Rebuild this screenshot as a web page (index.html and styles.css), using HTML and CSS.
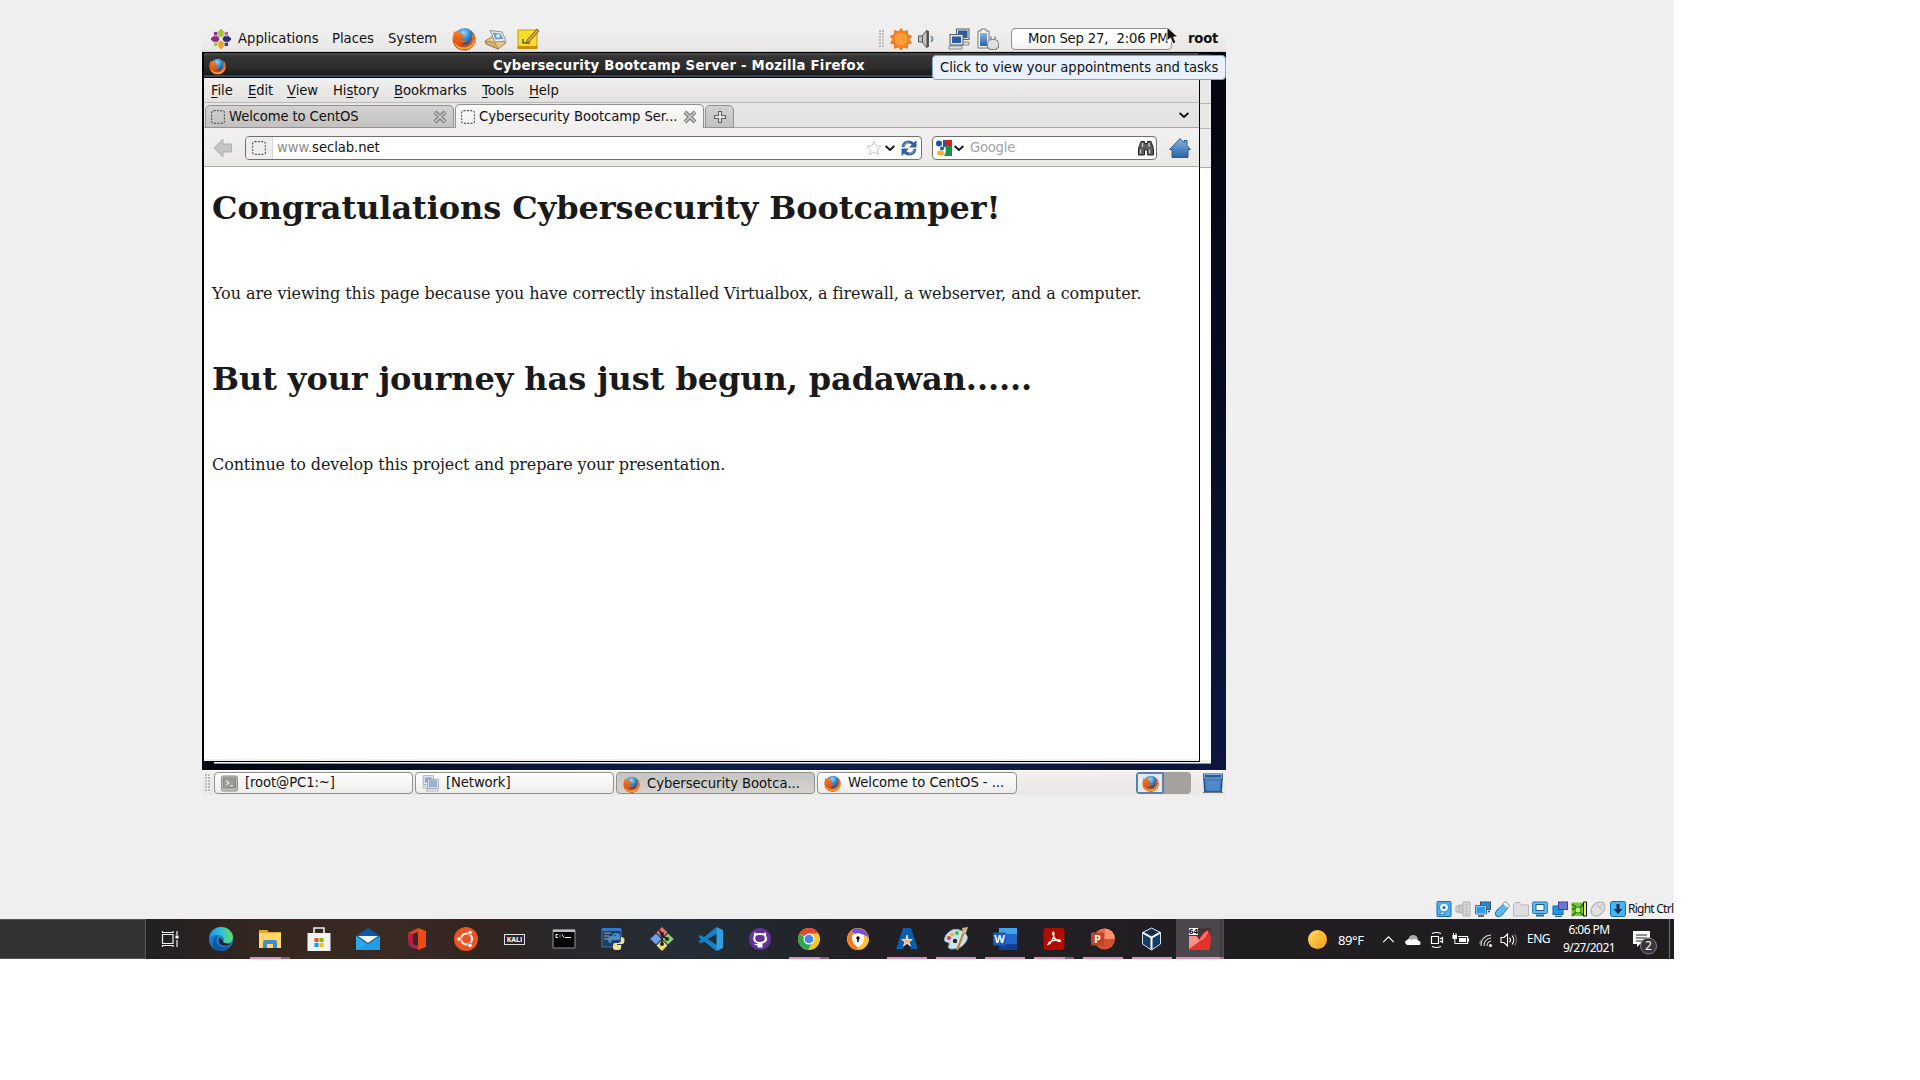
FILE: index.html
```html
<!DOCTYPE html>
<html lang="en">
<head>
<meta charset="utf-8">
<title>Cybersecurity Bootcamp Server</title>
<link rel="stylesheet" href="styles.css">
</head>
<body>
<svg class="defs" aria-hidden="true">
  <defs>
    <radialGradient id="globe" cx=".45" cy=".25" r=".7"><stop offset="0" stop-color="#9bd8f5"/><stop offset=".5" stop-color="#2b7fc4"/><stop offset="1" stop-color="#123a78"/></radialGradient>
    <linearGradient id="fox" x1="0" y1="0" x2="0" y2="1"><stop offset="0" stop-color="#f5852a"/><stop offset=".6" stop-color="#e0591a"/><stop offset="1" stop-color="#b5330d"/></linearGradient>
    <linearGradient id="blue" x1="0" y1="0" x2="0" y2="1"><stop offset="0" stop-color="#86b4e2"/><stop offset="1" stop-color="#2d62a6"/></linearGradient>
    <linearGradient id="edge" x1="0" y1="0" x2="1" y2="0"><stop offset="0" stop-color="#1f8fe0"/><stop offset=".5" stop-color="#2fc3d8"/><stop offset="1" stop-color="#62de62"/></linearGradient>
  </defs>
  <symbol id="firefox" viewBox="0 0 24 24">
    <circle cx="12.500" cy="11" r="10" fill="url(#globe)"/>
    <path d="M2 3l1 2.500 3-2.500 1 3C10 6 12 8 11.500 9.500L9 11c0 2 3 3 6 1.500-1 3-4 4.500-6.500 3.500 2 2.500 7 2.500 9.500-.5 2.500-3 2.500-6 1.500-8.500L21 8.500 20.500 4C24 8 24.800 14 22 18c-3 5-9 7-14.500 4.500C1 20-.8 13 1.500 7z" fill="url(#fox)"/>
    <path d="M2.500 15c3 5 9 6.500 13.500 4.500 3.500-1.500 5.500-4 6-8C24 18 18 23 12 22.500 7 22.500 3 20 2.500 15z" fill="#f9a637"/>
  </symbol>
  <symbol id="blank" viewBox="0 0 14 14"><rect x=".6" y=".6" width="12.800" height="12.800" rx="2" fill="none" stroke="#555" stroke-width="1.100" stroke-dasharray="2 1.300"/></symbol>
  <symbol id="close" viewBox="0 0 14 14"><path d="M2 2l10 10M12 2L2 12" stroke="#7c7e79" stroke-width="4"/><path d="M2.300 2.300l9.400 9.400m0-9.400l-9.400 9.400" stroke="#c4c5c2" stroke-width="1.800"/></symbol>
  <symbol id="chev" viewBox="0 0 10 6"><path d="M.6 1L5 5l4.400-4" fill="none" stroke="#111" stroke-width="1.900"/></symbol>
  <symbol id="monitors" viewBox="0 0 22 22"><path d="M12 14h9v3h-9zM1 18h13v3H1z" fill="#dfe2dd" stroke="#777" stroke-width=".8"/><rect x="8.500" y="1" width="12.500" height="10.500" fill="#e1e4e8" stroke="#59616b"/><rect x="10" y="2.500" width="9.500" height="7.500" fill="#2c5c9b"/><rect x="2" y="6.500" width="13" height="10.500" fill="#e1e4e8" stroke="#59616b"/><rect x="4" y="8.500" width="9" height="6.500" fill="#2c5c9b"/></symbol>
  <symbol id="monitors-dim" viewBox="0 0 22 22"><path d="M1 14h12v3H1zM6 18h15v3H6z" fill="#e0e0de" stroke="#b0b0ae" stroke-width=".8"/><rect x="1.500" y="1" width="13" height="11" fill="#f1f3f5" stroke="#8f9bb0"/><rect x="3.500" y="3" width="9" height="7" fill="#8fa6cc"/><rect x="7.500" y="5.500" width="13.500" height="11.500" fill="#f1f3f5" stroke="#8f959e"/><rect x="9.500" y="7.500" width="9.500" height="7.500" fill="#9db3d6" stroke="#7690bb" stroke-width=".8"/></symbol>
</svg>

<main class="stage">
  <section class="vm">
    <header class="panel panel-top">
      <svg class="i22" viewBox="0 0 22 22"><g stroke="#fff" stroke-width=".7"><path d="M3.500 3.500h6v6h-6z" fill="#8f2f86"/><path d="M12.500 3.500h6v6h-6z" fill="#b06aa6"/><path d="M3.500 12.500h6v6h-6z" fill="#a3bf3a"/><path d="M12.500 12.500h6v6h-6z" fill="#3b3b80"/><path d="M11 0l3.200 3.200v5L11 10 7.800 8.200v-5z" fill="#a4c639"/><path d="M22 11l-3.200 3.200h-5L12 11l1.800-3.200h5z" fill="#2c2d77"/><path d="M11 22l-3.200-3.200v-5L11 12l3.200 1.800v5z" fill="#eda52f"/><path d="M0 11l3.200-3.200h5L10 11l-1.800 3.200h-5z" fill="#8d2a83"/></g></svg>
      <span>Applications</span><span>Places</span><span>System</span>
      <svg class="i24"><use href="#firefox"/></svg>
      <svg class="i24" viewBox="0 0 24 24"><path d="M1 14L9 9l13 7-8 6-12-5z" fill="#e9c48d" stroke="#9b7a4b" stroke-width=".9"/><path d="M6 3.500L18 5l4 9-11 1z" fill="#eef3f1" stroke="#7c8b8c" stroke-width=".9"/><path d="M8.500 5.500l8 1 3 5.500-8 .5z" fill="#6b9fc0"/><circle cx="14" cy="9" r="2" fill="#d8e8ea"/><path d="M1.500 14l9 1.500 4 6.500-12-5z" fill="#dcb072" stroke="#9b7a4b" stroke-width=".7"/></svg>
      <svg class="i24" viewBox="0 0 24 24"><path d="M2 3h19v17H2z" fill="#f7dd28" stroke="#c79d0c"/><path d="M1.500 19h20v3h-20z" fill="#c79000"/><path d="M7 12v4h7" fill="none" stroke="#333" stroke-width="1.200"/><path d="M21 2L11 13l-1 3 3-1L23 4z" fill="#d9a247" stroke="#5f4b23" stroke-width=".8"/></svg>
      <i></i>
      <i class="grip"></i>
      <svg class="i22" viewBox="0 0 22 22"><path d="M11 .5l2.500 3.300L17.500 2.500v4.200l4 1.300-2.300 3.500 2.300 3.500-4 1.200v4.100l-4-1.200L11 22l-2.500-2.900-4 1.200v-4.100l-4-1.200 2.300-3.500L.5 8l4-1.300V2.500l4 1.300z" fill="#f58220" stroke="#dc7012" stroke-width=".8"/><circle cx="11" cy="11" r="6.500" fill="#fc9c38"/></svg>
      <svg class="i22" viewBox="0 0 22 22"><path d="M1.500 8H5l5-6v18l-5-6H1.500z" fill="#c3c6c0" stroke="#555"/><path d="M5.500 7.500v7" stroke="#555"/><path d="M11 3v16" stroke="#444" stroke-width="1.800"/><path d="M14 8q3 3 0 6" fill="none" stroke="#6d87aa" stroke-width="1.700"/></svg>
      <svg class="i22"><use href="#monitors"/></svg>
      <svg class="i22" viewBox="0 0 22 22"><path d="M1 3h3V1h5v2h3v17H1z" fill="#f3f5f3" stroke="#777"/><path d="M3 5h7v13H3z" fill="url(#blue)"/><path d="M14 12V8.500M18 12V8.500" stroke="#82857f" stroke-width="1.500"/><path d="M10.500 20v-4.500q0-4 4-4h3q4 0 4 4V20h-2v1.500h-7V20z" fill="#dfe1dd" stroke="#82857f"/></svg>
      <div class="clock">Mon Sep 27,&nbsp; 2:06 PM</div>
      <b class="user">root</b>
    </header>

    <div class="desktop">
      <div class="back-window"><i class="b-title"></i><i class="b-menu"></i><i class="b-tabs"></i><i class="b-tools"></i><i class="b-page"></i></div>
      <div class="window">
        <div class="title"><svg class="i17"><use href="#firefox"/></svg><b>Cybersecurity Bootcamp Server - Mozilla Firefox</b></div>
        <nav class="menu"><span><u>F</u>ile</span><span><u>E</u>dit</span><span><u>V</u>iew</span><span>Hi<u>s</u>tory</span><span><u>B</u>ookmarks</span><span><u>T</u>ools</span><span><u>H</u>elp</span></nav>
        <div class="tabs">
          <div class="tab"><svg class="i14"><use href="#blank"/></svg><span class="t1">Welcome to CentOS</span><svg class="i14"><use href="#close"/></svg></div>
          <div class="tab active"><svg class="i14"><use href="#blank"/></svg><span class="t2">Cybersecurity Bootcamp Ser...</span><svg class="i14"><use href="#close"/></svg></div>
          <div class="tab plus"><svg class="i14" viewBox="0 0 14 14"><path d="M5.500 1.500h3v4h4v3h-4v4h-3v-4h-4v-3h4z" fill="#e6e6e5" stroke="#62645f" stroke-width="1.100"/></svg></div>
          <svg class="chev all"><use href="#chev"/></svg>
        </div>
        <div class="tools">
          <svg class="back" viewBox="0 0 20 20"><path d="M1 10l9-9v5h8.500v8H10v5z" fill="#c3c5c5" stroke="#b0b2b2"/></svg>
          <div class="field url">
            <div class="site"><svg class="i14"><use href="#blank"/></svg></div>
            <span class="addr"><em>www.</em>seclab.net</span>
            <svg class="star" viewBox="0 0 16 16"><path d="M8 1l2 4.800 5.200.4-4 3.400 1.300 5L8 12l-4.500 2.600 1.300-5-4-3.400L6 5.800z" fill="#fff" stroke="#c5c5c5"/></svg>
            <svg class="chev"><use href="#chev"/></svg>
            <svg class="i16" viewBox="0 0 16 16"><path d="M2 7Q3 2 8 2q2.500 0 4 2M14 9q-1 5-6 5-2.500 0-4-2" fill="none" stroke="#315f9f" stroke-width="3"/><path d="M15.500 0v7.500H8zM.5 16V8.500H8z" fill="#315f9f"/><path d="M2.500 6Q4 2.500 8 2.500M13.500 10Q12 13.500 8 13.500" fill="none" stroke="#a9c6e8" stroke-width=".9"/></svg>
          </div>
          <div class="field search">
            <svg class="i16" viewBox="0 0 16 16"><path d="M0 0h9v16H0z" fill="#fff"/><path d="M9 0h7v6H9z" fill="#db1e1c"/><path d="M9 6h7v10H8q3-4 1-10z" fill="#159340"/><path d="M7 0h2v7H7z" fill="#1f52b0"/><circle cx="3" cy="3.500" r="3" fill="#1f52b0"/><circle cx="6" cy="8.500" r="2" fill="#1f52b0"/><ellipse cx="4.500" cy="13" rx="3.500" ry="2.600" fill="#f2b517"/></svg>
            <svg class="chev"><use href="#chev"/></svg>
            <span class="google">Google</span>
            <svg class="i16" viewBox="0 0 16 16"><path d="M3 1.500h3.500v2h3v-2H13l2.500 7V15H9.500v-5h-3v5h-6V8.500z" fill="#5b5d5a" stroke="#222"/><path d="M2.500 9.500v4M11.500 9.500v4M4.500 3v4M11 3v4" stroke="#c5c8c3" stroke-width="1.400"/></svg>
          </div>
          <svg class="home" viewBox="0 0 22 20"><path d="M11 .5l4 4V2.500h3v5l3.500 4H19V19.500H3v-8H.5z" fill="url(#blue)" stroke="#2d5a94"/></svg>
        </div>
        <article class="page">
          <h1 class="h1">Congratulations Cybersecurity Bootcamper!</h1>
          <p class="p1">You are viewing this page because you have correctly installed Virtualbox, a firewall, a webserver, and a computer.</p>
          <h1 class="h2">But your journey has just begun, padawan......</h1>
          <p class="p2">Continue to develop this project and prepare your presentation.</p>
        </article>
        <div class="status"></div>
      </div>
    </div>

    <footer class="panel panel-bottom">
      <i class="grip"></i>
      <div class="task"><svg class="i17" viewBox="0 0 17 17"><rect x=".5" y="1" width="16" height="15" rx="1.500" fill="#c2c3c0" stroke="#8a8c88"/><rect x="2.500" y="3" width="12" height="10" fill="#9a9c98" stroke="#858783"/><path d="M5 5.500l3 2.300-3 2.300m4 .6h3" fill="none" stroke="#eee" stroke-width="1.100"/></svg><span>[root@PC1:~]</span></div>
      <div class="task"><svg class="i17"><use href="#monitors-dim"/></svg><span>[Network]</span></div>
      <div class="task pressed"><svg class="i17"><use href="#firefox"/></svg><span class="tc">Cybersecurity Bootca...</span></div>
      <div class="task"><svg class="i17"><use href="#firefox"/></svg><span class="tw">Welcome to CentOS - ...</span></div>
      <div class="switcher"><div><svg class="i17"><use href="#firefox"/></svg></div></div>
      <svg class="trash" viewBox="0 0 20 20"><path d="M.8 1h18.400v4l-1 14H1.800l-1-14z" fill="#3e79bd" stroke="#1d4478" stroke-width="1.200"/><path d="M1.500 1.500h17v3.500h-17z" fill="#2b5a98" stroke="#7fabd8"/><path d="M3 7.500h14l-1 10H4z" fill="#5289c8"/><path d="M0 19.500h20" stroke="#777"/></svg>
    </footer>
    <div class="tooltip">Click to view your appointments and tasks</div>
    <svg class="cursor" viewBox="0 0 13 19"><path d="M1 1v14l3.500-3 2.500 6 3-1.500-2.500-5.500H12z" fill="#111" stroke="#fff"/></svg>
  </section>

  <div class="vbox">
    <svg viewBox="0 0 16 16"><rect x="1" y=".5" width="14" height="15" rx="1" fill="#4db2f5" stroke="#126cae"/><circle cx="8" cy="6.500" r="4.500" fill="#e6f5ff" stroke="#1f6fad" stroke-width=".8"/><circle cx="8" cy="6.500" r="1.500" fill="#1e72b8"/><path d="M3 13.500h6l-2-3z" fill="#fff" stroke="#1f6fad" stroke-width=".7"/></svg>
    <svg viewBox="0 0 16 16"><path d="M1 5h3v6H1zM4 4h3v8H4zM8 1h7v14H8z" fill="#d9d9d9" stroke="#b0b0b0"/><path d="M10 4h3M10 7h3M10 10h3M10 13h3" stroke="#aaa"/></svg>
    <svg viewBox="0 0 16 16"><rect x="5.500" y="1" width="10" height="7.500" fill="#1c8de0" stroke="#3a4f61"/><rect x="1" y="5" width="10" height="7.500" fill="#279df1" stroke="#e4f3ff"/><path d="M.5 4.500h11v8.500H.5z" fill="none" stroke="#31495c" stroke-width=".8"/><path d="M3 15h6m4-4.500h2" stroke="#31495c" stroke-width="1.500"/></svg>
    <svg viewBox="0 0 16 16"><path d="M10 3l4 4-6 7q-3 3-6 1-2-3 1-6z" fill="#5cb9f4" stroke="#2371ad"/><path d="M11.500.5l4 4-2.500 3-4.500-4.500z" fill="#eef6fb" stroke="#5d7a8f" stroke-width=".8"/></svg>
    <svg viewBox="0 0 16 16"><path d="M.5 4l2-2.500h4L8 4h7.500v11H.5z" fill="#dedede" stroke="#b7b7b7"/></svg>
    <svg viewBox="0 0 16 16"><rect x=".7" y="1" width="14.600" height="11.500" rx="1" fill="#5fc0fb" stroke="#1470b0"/><rect x="4" y="3.500" width="8" height="6" fill="#fff" stroke="#1c5a8b"/><path d="M4 14.500h8" stroke="#1470b0" stroke-width="2"/></svg>
    <svg viewBox="0 0 16 16"><rect x="1" y="5" width="10" height="8.500" fill="#2196ea" stroke="#1767a5"/><rect x="6.500" y="1" width="9" height="7.500" fill="#6b78cf" stroke="#3b428c"/><path d="M3 15.300h7" stroke="#1767a5" stroke-width="1.300"/></svg>
    <svg viewBox="0 0 16 16"><path d="M.5 1.500h14v13.500H.5z" fill="#70c934"/><path d="M1 3l5 4h3l4-5M1 8h3M1 15l5-5m3 1l4 4" fill="none" stroke="#2b6812" stroke-width="1.500"/><circle cx="7" cy="9" r="3" fill="#bbf179" stroke="#3c8518"/><path d="M12.500 1h3v14h-3z" fill="#d6f17b" stroke="#111"/></svg>
    <svg viewBox="0 0 16 16"><ellipse cx="8" cy="8" rx="8" ry="5.800" transform="rotate(-45 8 8)" fill="#e0e0e0" stroke="#aaa"/><path d="M7 4l5 5M9.500 6.500L13 3" stroke="#aaa" fill="none"/></svg>
    <svg viewBox="0 0 16 16"><rect x=".5" y=".5" width="15" height="15" rx="2" fill="#49b4f5" stroke="#166ca9"/><path d="M6.500 3h3v5h3L8 13 3.500 8h3z" fill="#0c2f50"/></svg>
    <span>Right Ctrl</span>
  </div>

  <footer class="taskbar">
    <div class="searchbox"></div>
    <div class="app view"><svg viewBox="0 0 24 24"><path d="M4.500 7.500h10.500v9H4.500zM4.500 4v1.500h10.500V4M4.500 20v-1.500h10.500V20M19 4v4m0 5v7" fill="none" stroke="#eee" stroke-width="1.200"/><path d="M17.500 8.500h3v3h-3z" fill="#fff"/></svg></div>
    <div class="app"><svg viewBox="0 0 24 24"><circle cx="12" cy="12" r="12" fill="#167fd2"/><path d="M0 11C1 4 6 0 12 0c7 0 12 5 12 10 0 4-3 6.500-6.500 6.500-3 0-4-1-3-2.500 1.500-2.500-1-6-5-6C5 8 1 9 0 11z" fill="url(#edge)"/><path d="M9 9c-4 5 0 11 6 11 4 0 6-1.500 7-2.500C19 22 16 24 12 24 6 24 2 20 4 14c1-3 3-5 5-5z" fill="#1556a0"/><path d="M10.500 11c-2 4 0 7 5 7.500 3 0 5-.5 7-2-4 .5-8 0-9-2.500-.3-1-1-3-3-3z" fill="#2a2020"/></svg></div>
    <div class="app open multi"><svg viewBox="0 0 24 24"><path d="M1 3h8l2 2h12v16H1z" fill="#e2a52b"/><path d="M1 6h22v15H1z" fill="#ffd869"/><path d="M5 21v-6q0-2 2-2h10q2 0 2 2v6h-4v-4H9v4z" fill="#3a8fd0"/></svg></div>
    <div class="app"><svg viewBox="0 0 24 24"><path d="M7 7V1h10v6" fill="none" stroke="#eee" stroke-width="1.600"/><path d="M.5 6h23v18H.5z" fill="#f2f2f2"/><path d="M7.500 11h4v4h-4z" fill="#f25022"/><path d="M12.500 11h4v4h-4z" fill="#7fba00"/><path d="M7.500 16h4v4h-4z" fill="#00a4ef"/><path d="M12.500 16h4v4h-4z" fill="#ffb900"/></svg></div>
    <div class="app"><svg viewBox="0 0 24 24"><path d="M0 9l12-8 12 8v4H0z" fill="#0c59a4"/><path d="M0 9l12 8L24 9v14H0z" fill="#2aa9ee"/><path d="M2 9h20l-10 7z" fill="#f4f9fd"/><path d="M24 9v14H0z" fill="#1789d8" opacity=".4"/></svg></div>
    <div class="app"><svg viewBox="0 0 24 24"><path d="M3 6l10-5v4L8 7v10l-4 2z" fill="#d8452b"/><path d="M4 19l4-2 6 2v4l-6-2z" fill="#a82454"/><path d="M13 1l8 3v16l-8 3z" fill="#ed4b13"/><path d="M3 6l5 1v10l-4 2z" fill="#b91c3d"/></svg></div>
    <div class="app"><svg viewBox="0 0 24 24"><circle cx="12" cy="12" r="12" fill="#e95420"/><circle cx="12.500" cy="12" r="5.500" fill="none" stroke="#fff" stroke-width="2"/><g fill="#fff" stroke="#e95420"><circle cx="5" cy="12" r="2.300"/><circle cx="16" cy="5.500" r="2.300"/><circle cx="16" cy="18.500" r="2.300"/></g></svg></div>
    <div class="app"><b class="kali">KALI</b></div>
    <div class="app"><svg viewBox="0 0 24 24"><path d="M1 3h22v18H1z" fill="#050505" stroke="#8d9296"/><path d="M1 2.500h22v2.500H1z" fill="#b9bec2"/><path d="M6 7.500H4v3h2m2-3v1m0 1v1m2-3l2 3m1 0h6" fill="none" stroke="#fff"/></svg></div>
    <div class="app"><svg viewBox="0 0 24 24"><path d="M1 2h19v18H1z" fill="#1e3f61" stroke="#3e76b3"/><path d="M1 1h19v3H1z" fill="#3479c8"/><path d="M3 6h7M3 9h5M3 12h4" stroke="#aaa"/><path d="M11 9q0-3 4-3t4 3v4h-7q-2 0-2 3H9q-2 0-2-4 0-3 3-3h5V8z" fill="#4a8cc4"/><path d="M12 21q0 2 4 2t4-2v-3h-4v-1h5q2.500 0 2.500-4 0-3-3.500-3v3q0 3-3 3h-3q-2 0-2 3z" fill="#fbe08a"/></svg></div>
    <div class="app"><svg viewBox="0 0 24 24"><path d="M12 0l5.500 5.500L12 11 6.500 5.500z" fill="#e86e6e"/><path d="M6 6.500l5.500 5.500L6 17.500.2 12z" fill="#6f9eee"/><path d="M18 6.500L12.500 12l5.500 5.500 5.800-5.500z" fill="#8bd164"/><path d="M12 13l5.500 5.500L12 24l-5.500-5.500z" fill="#f6db72"/><path d="M9 3l3 4v10M12 8l5 4" fill="none" stroke="#26242a" stroke-width="1.700"/><g fill="#26242a"><circle cx="12" cy="7" r="2"/><circle cx="17" cy="12" r="2"/><circle cx="12" cy="17" r="2"/></g></svg></div>
    <div class="app"><svg viewBox="0 0 24 24"><path d="M1.500 8L0 9.500V10.500L17.500 24l.5-6z" fill="#1683cc"/><path d="M1.500 16.500L0 15v-1L17.500 0l.5 6.500z" fill="#1180c8"/><path d="M17.500 0L24 3v18l-6.500 3z" fill="#2d9fe5"/></svg></div>
    <div class="app"><svg viewBox="0 0 24 24"><circle cx="12" cy="12" r="11" fill="#64309a"/><path d="M12 6q2 0 3 .5Q17 5 18 5.500q.7 1.500 0 3 3.500 6-3.500 8v4h-5v-2q-3 0-4-2 2 1 4 .5v-.8q-6-1-3.500-7.700-.5-1.500 0-3Q7.500 5 9 6.500 10 6 12 6z" fill="#fff"/><path d="M12 8q5-.5 4.800 3.500Q16.500 15 12 15t-4.800-3.500Q7 7.500 12 8z" fill="#64309a"/></svg></div>
    <div class="app open multi"><svg viewBox="0 0 24 24"><circle cx="12" cy="12" r="11" fill="#f7c62c"/><path d="M12 12L2.500 6.500A11 11 0 0 1 21.500 6.500H12z" fill="#e64634"/><path d="M2.500 6.500A11 11 0 0 0 11 23l4.500-8.500H12z" fill="#32a552"/><circle cx="12" cy="12" r="5.500" fill="#fff"/><circle cx="12" cy="12" r="4.300" fill="#4285f4"/></svg></div>
    <div class="app"><svg viewBox="0 0 24 24"><circle cx="12" cy="12" r="11" fill="#f8c52e"/><path d="M5 4a11 11 0 0 1 18 8q-3-6-12-4z" fill="#774ee5"/><path d="M5 4Q9 5 8 10t5 13A11 11 0 0 1 5 4z" fill="#f37a22"/><path d="M6 8l6-2 6 2q1 9-6 12-7-3-6-12z" fill="#fff"/><circle cx="12" cy="11" r="1.700"/><path d="M11.300 11h1.400v4h-1.400z"/></svg></div>
    <div class="app open"><svg viewBox="0 0 24 24"><path d="M8 1h8l7 21h-7l-4-12-4 12H1z" fill="#0c5da9"/><path d="M12 8l1.300 4.500h4l-3.300 2.500 1.500 4-3.500-2.500-3.500 2.500 1.500-4-3.300-2.500h4z" fill="#f6b37f" stroke="#fff" stroke-width=".7"/></svg></div>
    <div class="app open"><svg viewBox="0 0 24 24"><path d="M2 8Q9-1 18 4t3 12q-4 6-13 6-5 0-3-4 1-3-3-3-3-1 0-7z" fill="#c8e4ee" stroke="#8caab8"/><circle cx="5" cy="11" r="2" fill="#e23b35"/><circle cx="8" cy="7.500" r="2" fill="#f3b229"/><circle cx="13" cy="6" r="2" fill="#45b649"/><circle cx="11" cy="14" r="2.200" fill="#28242a"/><path d="M20 5L13 23" stroke="#c98636" stroke-width="2.200"/><path d="M18 1l6-1-2 6-3 1z" fill="#d7b383"/></svg></div>
    <div class="app open"><svg viewBox="0 0 24 24"><path d="M6 1h18v22H6z" fill="#2368c4"/><path d="M6 1h18v6H6z" fill="#41a5ee"/><path d="M6 17h18v6H6z" fill="#123f91"/><rect y="5.500" width="13" height="13" rx="1" fill="#185abd"/><text x="6.500" y="16" text-anchor="middle" class="glyph">W</text></svg></div>
    <div class="app open multi"><svg viewBox="0 0 24 24"><rect x="1.500" y="1" width="21" height="22" rx="3" fill="#b30b00"/><path d="M6 17.500c3-1 6-7 6-11 0-2-2-2-1 1 1 4 4 7 7 7 2-1-1-2.500-4-1.500-4 .5-7 2-8 4.500z" fill="none" stroke="#fff" stroke-width="1.300"/></svg></div>
    <div class="app open"><svg viewBox="0 0 24 24"><circle cx="13.500" cy="12" r="10.500" fill="#d35230"/><path d="M13.500 1.500A10.500 10.500 0 0 1 24 12H13.500z" fill="#ff9272"/><path d="M13.500 1.500A10.500 10.500 0 0 0 3 12h10.500z" fill="#ed6c47"/><rect y="5.500" width="13" height="13" rx="1" fill="#b7472a"/><text x="6.500" y="16" text-anchor="middle" class="glyph">P</text></svg></div>
    <div class="app open"><svg viewBox="0 0 24 24"><path d="M11.500 1l9 4.500v11.500l-9 6-9-6V5.500z" fill="#173a66" stroke="#d3deea"/><path d="M2.500 5.500l9 5 9-5M11.500 10.500v12" fill="none" stroke="#fff" stroke-width="2"/><path d="M11.500 3l5 2.500-5 2.500-5-2.500z" fill="#10294a"/></svg></div>
    <div class="app open current multi"><svg viewBox="0 0 24 24"><path d="M1 1h22v22H1z" fill="#393939"/><path d="M1 9h8l3 3 9-9 2 7-1 13H1z" fill="#e6322c"/><path d="M10 14Q16 3 21 3q0 7-8 12z" fill="#ff695f" stroke="#a21616" stroke-width=".8"/><path d="M1 9h7l4 5-11 8z" fill="#f8948c"/><path d="M1 1h9v7H1z" fill="#fff"/><text x="5.500" y="7" text-anchor="middle" class="tiny">64</text></svg></div>
    <div class="tray">
      <i class="weather"></i><span class="temp">89°F</span>
      <svg class="up" viewBox="0 0 14 8"><path d="M1 7l6-6 6 6" fill="none" stroke="#fff" stroke-width="1.300"/></svg>
      <svg class="t17" viewBox="0 0 17 17"><path d="M4 12Q4 3 10 4q4 1 4 5" fill="#aaa"/><path d="M3 14q-4-3 0-5 2-2 5 0 2-2 5 0 5 1 3 5z" fill="#fff"/></svg>
      <svg class="t17 cam" viewBox="0 0 17 17"><path d="M3.500 5.500h7v7h-7zM12 8l2.500-1.500v5L12 10M4 2.500q4.500-2 9 0M4 15.500q4.500 2 9 0" fill="none" stroke="#fff" stroke-width="1.200"/></svg>
      <svg class="t17 bat" viewBox="0 0 17 17"><path d="M6 5.500h9.500v7H4.500M16.500 7.500v3" fill="none" stroke="#fff" stroke-width="1.200"/><path d="M7 7h7v4H7zM.5 4h4.500v4H.5z" fill="#fff"/><path d="M1.500 2v2m2.500-2v2M2.800 8v4.500h2" stroke="#fff" fill="none"/></svg>
      <svg class="t17 wifi" viewBox="0 0 17 17"><g fill="none" stroke="#ddd" stroke-width="1.100"><path d="M3 15Q3 5 13 4M6 15q0-7 7-8M9 15q0-4 4-5"/></g><path d="M3 15V8l-2 4z" fill="#777"/><circle cx="12.500" cy="14.500" r="1.500" fill="#fff"/></svg>
      <svg class="t17 vol" viewBox="0 0 17 17"><path d="M1 6.500h3l3.500-3.500v12L4 11.500H1zM9.500 6.500q2 2.500 0 5M12 4.500q3.500 4.500 0 9" fill="none" stroke="#fff" stroke-width="1.100"/><path d="M14.500 3q4 6 0 12" fill="none" stroke="#777"/></svg>
      <span class="eng">ENG</span>
      <div class="when"><span>6:06 PM</span><span>9/27/2021</span></div>
      <svg class="note" viewBox="0 0 26 26"><path d="M1 2h17v13H8l-3 3v-3H1z" fill="#fff"/><path d="M4 6h11M4 9h11M4 12h7" stroke="#242024" stroke-width="1.100"/><circle cx="16.500" cy="17" r="8" fill="#39353a" stroke="#858187"/><text x="16.500" y="21" text-anchor="middle" class="count">2</text></svg>
      <i class="peek"></i>
    </div>
  </footer>
</main>
</body>
</html>
```
FILE: styles.css
```css
* { box-sizing: border-box; }
body { margin: 0; background: #fff; font: 13.2px/16px "DejaVu Sans", sans-serif; color: #111; }
svg { display: block; flex: none; overflow: visible; }
span, b { white-space: nowrap; }
.defs { position: absolute; width: 0; height: 0; }
.i14 { width: 14px; height: 14px; }
.i16 { width: 16px; height: 16px; }
.i17 { width: 17px; height: 17px; }
.i22 { width: 22px; height: 22px; }
.i24 { width: 24px; height: 24px; }

.stage { width: 1674px; height: 959px; background: #efefef; padding-top: 26px; display: flex; flex-direction: column; }
.vm { position: relative; width: 1024px; height: 769px; margin-left: 202px; display: flex; flex-direction: column; }
.panel { display: grid; align-items: center; background: linear-gradient(#f1f0ef, #e9e8e6); }
.panel-top { height: 26px; padding: 0 0 0 8px; border-bottom: 1px solid #cfcfcd; grid-template-columns: 28px 94px 56px 64px 32px 32px 24px 1fr 11px 27px 31px 29px 34px 161px 54px; }
.panel-top > svg { justify-self: start; }
.grip { width: 6px; height: 18px; background: radial-gradient(circle at 1px 1px, #bbb .8px, transparent 1.100px) 0 0 / 3px 3px; }
.clock { height: 22px; border: 1px solid #8e8e8a; border-radius: 4px; background: linear-gradient(#fff 50%, #f0f0ef); padding: 2px 0 0 16px; white-space: pre; letter-spacing: -.15px; }
.user { color: #111; padding-left: 16px; letter-spacing: -.2px; }

.desktop { position: relative; height: 718px; background: linear-gradient(90deg, #03060f, #0c1b48 45%, #0e1b45 75%, #0a1538 90%, transparent 96%), linear-gradient(#03050e, #060c22 50%, #0b1740); }
.back-window { position: absolute; left: 12px; top: 2px; width: 997px; height: 710px; background: #efefef; border-bottom: 1px solid #9a9a9a; display: flex; flex-direction: column; }
.b-title { height: 24px; background: #303030; }
.b-menu { height: 26px; background: #e9e8e7; border-bottom: 1px solid #b5b5b3; }
.b-tabs { height: 25px; background: #e9e8e7; border-bottom: 1px solid #b5b5b3; }
.b-tools { height: 39px; background: #edecea; border-bottom: 1px solid #aaa; }
.b-page { flex: 1; background: #fff; margin-bottom: 3px; }
.window { position: absolute; left: 0; top: 0; width: 998px; height: 710px; border: 1px solid #000; border-width: 1px 1px 1px 2px; border-radius: 5px 5px 0 0; display: flex; flex-direction: column; background: #fff; overflow: hidden; }
.title { height: 25px; display: flex; align-items: center; padding: 1px 0 0 5px; background: linear-gradient(#4a4a4a, #333 15%, #2d2d2d 60%, #191919 88%, #58708c 92%, #000 98%); color: #fff; }
.title b { margin-left: 267px; letter-spacing: .26px; }
.menu { height: 25px; padding: 1px 0 0 7px; display: grid; grid-template-columns: 37px 39px 46px 61px 88px 47px 1fr; align-items: center; background: linear-gradient(#f0f0ef, #e3e2e0); border-bottom: 1px solid #b8b8b6; }
.menu span { letter-spacing: -.1px; }
.menu u { text-underline-offset: 2px; }
.tabs { height: 25px; display: flex; align-items: flex-end; gap: 1px; padding-left: 1px; background: linear-gradient(#e8e7e6, #e2e1df); border-bottom: 1px solid #a7a7a5; }
.tab { width: 249px; height: 23px; margin-bottom: -1px; display: flex; align-items: center; padding: 1px 6px 0 5px; border: 1px solid #929290; border-radius: 5px 5px 0 0; background: linear-gradient(#d3d2d1, #c2c1c0); }
.tab.active { height: 24px; background: linear-gradient(#fafafa, #f0efee); border-bottom: 0; }
.tab span { flex: 1; padding-left: 4px; letter-spacing: -.12px; }
.tab .t2 { letter-spacing: -.06px; }
.tab.plus { width: 29px; padding: 0 0 0 7px; }
.chev { width: 10px; height: 6px; }
.chev.all { margin: 0 10px 9px auto; }
.tools { height: 39px; display: flex; align-items: center; background: linear-gradient(#f2f1f0, #eae9e7); border-bottom: 1px solid #a9a9a7; padding: 1px 0 0 9px; }
.back { width: 20px; height: 20px; }
.field { height: 24px; background: #fff; border: 1px solid #6f706c; border-radius: 4px; display: flex; align-items: center; }
.url { width: 677px; margin-left: 12px; }
.site { width: 27px; height: 100%; display: grid; place-items: center; background: #efeeed; border-right: 1px solid #d6d6d5; border-radius: 3px 0 0 3px; }
.addr { flex: 1; padding-left: 4px; letter-spacing: -.06px; }
.addr em { color: #8c8c8c; font-style: normal; }
.star { width: 16px; height: 16px; margin-right: 3px; }
.url .i16 { margin: 0 4px 0 6px; }
.search { width: 225px; margin-left: 10px; padding: 0 2px 0 3px; }
.search .chev { margin-left: 2px; }
.google { flex: 1; padding-left: 6px; color: #a3a3a3; letter-spacing: -.25px; }
.home { width: 22px; height: 20px; margin-left: 12px; }
.page { height: 592px; padding: 22px 0 0 8px; font-family: "DejaVu Serif", serif; color: #1a1a1a; }
.page h1 { font-size: 32px; line-height: 38px; margin: 0; white-space: nowrap; letter-spacing: -.09px; }
.page p { font-size: 16px; line-height: 19px; margin: 57px 0; white-space: nowrap; }
.page .p1 { letter-spacing: -.048px; }
.page .p2 { letter-spacing: -.107px; }
.status { flex: 1; background: #efefee; }

.panel-bottom { height: 25px; padding-left: 3px; border-top: 1px solid #fff; grid-template-columns: 7px 199px 199px 199px 200px 55px 20px; column-gap: 2px; }
.task { height: 22px; display: flex; align-items: center; padding-left: 6px; border: 1px solid #90908c; border-radius: 4px; background: linear-gradient(#fff, #ececeb); }
.task span { margin-left: 7px; letter-spacing: -.1px; }
.task .tc, .task .tw { letter-spacing: -.05px; }
.task.pressed { background: linear-gradient(#c6c4c1, #d5d3d0); padding-top: 2px; }
.switcher { margin-left: 117px; width: 55px; height: 22px; border-radius: 4px; background: #a5a19e; overflow: hidden; }
.switcher div { width: 28px; height: 22px; border: 2px solid #5d7fab; border-radius: 2px; background: #e3ebf6; display: grid; place-items: center; }
.trash { width: 20px; height: 20px; margin-left: 127px; }
.tooltip { position: absolute; left: 730px; top: 29px; width: 294px; height: 25px; padding: 4px 0 0 7px; background: #e8f1fc; border: 1px solid #83a4c9; border-radius: 4px; white-space: nowrap; letter-spacing: -.06px; }
.cursor { position: absolute; left: 964px; top: 0; width: 13px; height: 19px; }

.vbox { height: 20px; margin: auto 0 0 1436px; display: flex; align-items: center; gap: 3.300px; color: #111; font: 12px/16px "Noto Sans", sans-serif; }
.vbox svg { width: 16px; height: 16px; }
.vbox span { margin-left: -1px; letter-spacing: -.75px; }

.taskbar { height: 40px; display: flex; background: linear-gradient(90deg, #211f23 145px, #34271f 260px, #3a2a24 400px, #32241f 480px, #29282c 560px, #232d35 690px, #222024 860px, #201c20); color: #fff; font-family: "Noto Sans", sans-serif; }
.searchbox { width: 146px; background: #323232; border: 1px solid #555; border-width: 1px 1px 1px 0; }
.app { width: 49px; border-bottom: 2px solid transparent; display: grid; place-items: center; padding-top: 2px; background-origin: border-box; }
.app svg { width: 24px; height: 24px; }
.app.view { width: 50px; padding-right: 2px; }
.app.open { background: linear-gradient(#e28fb5, #e28fb5) 50% 100% / 40px 2px no-repeat border-box; }
.app.open.multi { background: linear-gradient(90deg, #e28fb5 31px, #8e5c76 31px) 50% 100% / 40px 2px no-repeat border-box; }
.app.open.current { background: linear-gradient(90deg, #e28fb5 44px, #a86c88 44px) 0 100% / 48px 2px no-repeat border-box, linear-gradient(90deg, #4b474b 44px, #333034 44px, #49454a 46px) border-box; width: 48px; }
.kali { width: 21px; height: 11px; border: 1px solid #ddd; font: bold 7px/9px "Open Sans", sans-serif; text-align: center; }
.glyph { font: bold 11px "Open Sans", sans-serif; fill: #fff; }
.tiny { font: bold 7px "DejaVu Sans", sans-serif; fill: #111; }
.tray { flex: 1; display: flex; align-items: center; padding-left: 84px; font-size: 13px; }
.weather { width: 19px; height: 19px; border-radius: 50%; background: linear-gradient(135deg, #ffdd5c, #fb9818); }
.temp { width: 28px; margin: 2px 0 0 11px; letter-spacing: -.4px; }
.up { width: 13px; height: 7px; margin-left: 16px; }
.t17 { width: 17px; height: 17px; margin-left: 9px; }
.t17.cam { margin-left: 7px; }
.t17.bat { margin-left: 7px; }
.t17.wifi { margin-left: 9px; }
.t17.vol { margin-left: 5px; }
.eng { width: 24px; margin-left: 10px; font-size: 12px; letter-spacing: -.5px; }
.when { width: 56px; margin-left: 10px; display: flex; flex-direction: column; align-items: center; font-size: 12px; line-height: 18px; letter-spacing: -.55px; }
.note { width: 26px; height: 26px; margin: 5px 0 0 15px; }
.count { font: 12px "Noto Sans", sans-serif; fill: #fff; }
.peek { width: 1px; height: 40px; margin-left: auto; margin-right: 4px; background: #737075; }
```
